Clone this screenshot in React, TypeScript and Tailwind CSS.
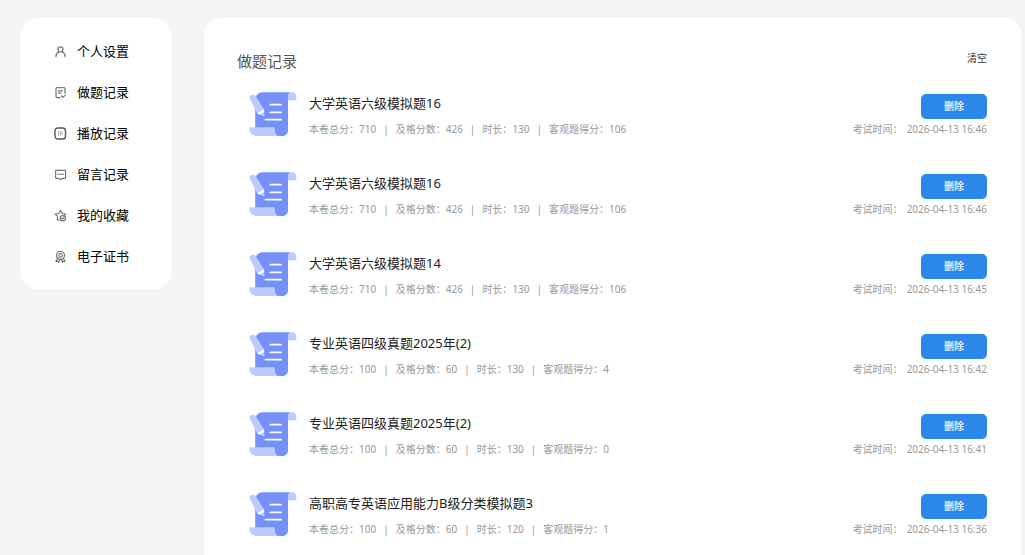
import type { ReactNode } from 'react'

interface MenuItem {
  label: string
  icon: ReactNode
}

interface ExamRecord {
  id: number
  title: string
  total: number
  pass: number
  duration: number
  score: number
  time: string
}

const MENU: MenuItem[] = [
  {
    label: '个人设置',
    icon: (
      <>
        <circle cx="6.5" cy="4.3" r="2.5" />
        <path d="M1.9 11.6c.2-2.9 1.6-4.4 3.2-5M11.1 11.6c-.2-2.9-1.6-4.4-3.2-5" />
      </>
    ),
  },
  {
    label: '做题记录',
    icon: (
      <>
        <path d="M11 7.2V2.6c0-.6-.4-1-1-1H3c-.6 0-1 .4-1 1v8c0 .6.4 1 1 1h3.2" />
        <path d="M4.3 4.8h4.4M4.3 7.2h2.8M7.6 10l1.3 1.4 2.5-2.3" />
      </>
    ),
  },
  {
    label: '播放记录',
    icon: (
      <>
        <rect x="1" y="1" width="10.5" height="11" rx="2.8" stroke="#555" strokeWidth="1.4" />
        <path d="M4.500 4.600v3.800M6.200 4.900v3.400l2.500-1.700z" strokeWidth="0.6" />
      </>
    ),
  },
  {
    label: '留言记录',
    icon: (
      <>
        <path d="M5 10.4H2.4c-.5 0-.8-.3-.8-.8V3.2c0-.5.3-.8.8-.8h8.4c.5 0 .8.3.8.8v6.4c0 .5-.3.8-.8.8H8.2l-1.6 1.2z" />
        <path d="M3.8 6.2h1M6.1 6.2h1M8.400 6.2h1" />
      </>
    ),
  },
  {
    label: '我的收藏',
    icon: (
      <>
        <path d="M5.4 11H3.3l.4-3.6L1.3 5.2l3.400-.7 1.800-3 1.800 3 3.500.7-1.200 1.200" />
        <circle cx="8.900" cy="9.200" r="2.600" />
        <path d="M7.800 9.300l.8.8 1.500-1.600" />
      </>
    ),
  },
  {
    label: '电子证书',
    icon: (
      <>
        <circle cx="6.5" cy="5.4" r="4" />
        <circle cx="6.5" cy="5.4" r="1.8" />
        <path d="M3.6 8.3l-1.7 3 1.7-.2.8 1.2 1.5-2.8M9.4 8.3l1.7 3-1.7-.2-.8 1.2-1.5-2.8" />
      </>
    ),
  },
]

const RECORDS: ExamRecord[] = [
  { id: 1, title: '大学英语六级模拟题16', total: 710, pass: 426, duration: 130, score: 106, time: '2026-04-13 16:46' },
  { id: 2, title: '大学英语六级模拟题16', total: 710, pass: 426, duration: 130, score: 106, time: '2026-04-13 16:46' },
  { id: 3, title: '大学英语六级模拟题14', total: 710, pass: 426, duration: 130, score: 106, time: '2026-04-13 16:45' },
  { id: 4, title: '专业英语四级真题2025年(2)', total: 100, pass: 60, duration: 130, score: 4, time: '2026-04-13 16:42' },
  { id: 5, title: '专业英语四级真题2025年(2)', total: 100, pass: 60, duration: 130, score: 0, time: '2026-04-13 16:41' },
  { id: 6, title: '高职高专英语应用能力B级分类模拟题3', total: 100, pass: 60, duration: 120, score: 1, time: '2026-04-13 16:36' },
]

function ScrollIcon() {
  return (
    <svg className="h-[45px] w-12 shrink-0" viewBox="0 0 48 45" aria-hidden="true">
      <path d="M14 .3h29c-2.6 0-4 1.8-4 4.5V38c0 3.6-2.4 6-6 6H19L6.2 36V8C6.2 3.5 9.5.3 14 .3z" fill="#7391f7" />
      <path d="M43 .3c2.6 0 4.2 1.8 4.2 4.5v3.5H39V4.8C39 2 40.5.3 43 .3z" fill="#bfcbff" />
      <path d="M.2 35.3h25.6v2.5c0 3.7 1.7 6.2 5 6.2H8.5C3.5 44 .2 41.5.2 35.3z" fill="#bfcbff" />
      <path d="M25.8 35.3v2.5c0 3.7 2.4 6.2 6.7 6.2 4 0 6.5-2.4 6.5-6.2v-2.5z" fill="#7391f7" />
      <path d="M1 7.5C.2 5.8.9 3.9 2.6 3.1c1.7-.8 3.6-.3 4.5 1.4l8 13.2.3 7.1-7-3.4z" fill="#bfcbff" />
      <path d="M8.4 21.4c.8-1.6 1.8-1.6 2.8-1.4.2-1.3 1.5-2.6 3.9-2.3l.1 2.2c-1.5.2-2 .8-2.4 1.900-1.100-.1-1.700.1-2.200.7z" fill="#fff" />
      <path d="M21.400 12.700h10.700M21.400 20.400h10.700M16.500 27.700h15.600" stroke="#fff" strokeWidth="1.800" strokeLinecap="round" />
    </svg>
  )
}

function Sidebar() {
  return (
    <nav className="w-[150px] shrink-0 rounded-2xl bg-white pt-[13px] pb-3">
      {MENU.map((item) => (
        <a key={item.label} href="#" className="flex h-[41px] items-center gap-2.5 pl-[33px] text-[13px] text-black">
          <svg
            className="h-[13px] w-[13px]"
            viewBox="0 0 13 13"
            fill="none"
            stroke="#777"
            strokeWidth="1.2"
            strokeLinecap="round"
            strokeLinejoin="round"
            aria-hidden="true"
          >
            {item.icon}
          </svg>
          {item.label}
        </a>
      ))}
    </nav>
  )
}

function RecordRow({ record }: { record: ExamRecord }) {
  const stats = [
    { label: '本卷总分：', value: record.total },
    { label: '及格分数：', value: record.pass },
    { label: '时长：', value: record.duration },
    { label: '客观题得分：', value: record.score },
  ]

  return (
    <li className="flex h-20 items-center pl-3">
      <ScrollIcon />
      <div className="ml-3 flex min-w-0 flex-1 flex-col gap-2 pt-0.5">
        <h2 className="truncate text-[13px] leading-5 text-[#222]">{record.title}</h2>
        <p className="flex gap-[7px] text-[10px] leading-4 whitespace-nowrap text-[#999]">
          {stats.map((stat, i) => (
            <span key={stat.label} className="flex gap-[7px]">
              {i > 0 && <span>|</span>}
              <span>
                {stat.label}
                {stat.value}
              </span>
            </span>
          ))}
        </p>
      </div>
      <div className="flex shrink-0 flex-col items-end gap-0.5 pt-0.5">
        <button type="button" className="h-[25px] w-[66px] rounded-[5px] bg-[#2b88e8] text-[10px] font-medium text-white">
          删除
        </button>
        <p className="flex gap-1 text-[10px] leading-4 text-[#999]">
          <span>考试时间：</span>
          <time>{record.time}</time>
        </p>
      </div>
    </li>
  )
}

export default function App() {
  return (
    <div className="flex min-h-screen items-start gap-[33px] bg-[#f5f5f7] pt-[18px] pr-1 pb-8 pl-[21px] font-['Noto_Sans','Noto_Sans_CJK_SC',sans-serif]">
      <Sidebar />
      <main className="min-w-0 flex-1 rounded-2xl bg-white pt-8 pr-[34px] pb-8 pl-[33px]">
        <header className="flex h-6 items-start justify-between">
          <h1 className="text-[15px] leading-[22px] text-[#555]">做题记录</h1>
          <button type="button" className="text-[10px] leading-4 text-[#333]">
            清空
          </button>
        </header>
        <ul>
          {RECORDS.map((record) => (
            <RecordRow key={record.id} record={record} />
          ))}
        </ul>
      </main>
    </div>
  )
}
